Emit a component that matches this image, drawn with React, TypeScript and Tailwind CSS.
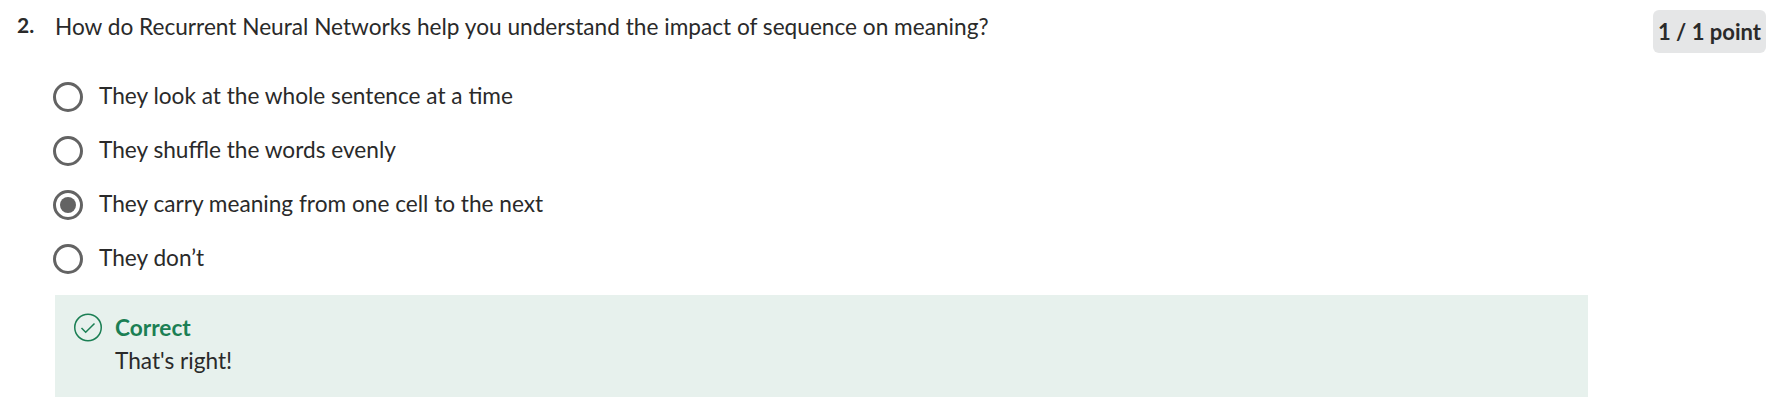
const options = [
  { label: "They look at the whole sentence at a time", checked: false },
  { label: "They shuffle the words evenly", checked: false },
  { label: "They carry meaning from one cell to the next", checked: true },
  { label: "They don’t", checked: false },
];

function Radio({ checked }: { checked: boolean }) {
  return (
    <span className="flex h-[30px] w-[30px] shrink-0 items-center justify-center rounded-full border-[3px] border-[#636363] bg-white">
      {checked && <span className="h-[16px] w-[16px] rounded-full bg-[#636363]" />}
    </span>
  );
}

export default function App() {
  return (
    <div className="h-[416px] w-[1776px] overflow-hidden bg-white font-['Lato',sans-serif] text-[22.65px] text-[#2a2a2a]">
      <div className="flex h-[53px] items-start pt-[10px] pr-[10px]">
        <div className="w-[55px] pl-[17px] text-[21px] leading-[30px] font-bold">2.</div>
        <div className="flex-1 pt-[2px] leading-[30px]">
          How do Recurrent Neural Networks help you understand the impact of sequence on meaning?
        </div>
        <div className="flex h-[43px] w-[113px] items-center justify-center rounded-[6px] bg-[#e5e6e7] text-[22px] font-bold">
          1 / 1 point
        </div>
      </div>

      <div className="ml-[53px] mt-[29px] flex w-[1534px] flex-col gap-[24px]">
        {options.map((opt) => (
          <div key={opt.label} className="flex h-[30px] items-center gap-[16px]">
            <Radio checked={opt.checked} />
            <span className="-translate-y-px">{opt.label}</span>
          </div>
        ))}
      </div>

      <div className="ml-[55px] mt-[21px] flex h-[102px] w-[1533px] gap-[13px] bg-[#e7f1ed] pt-[18px] pl-[19px]">
        <svg width="28" height="29" viewBox="0 0 28 29" fill="none" className="shrink-0" stroke="#1b7f54">
          <circle cx="14" cy="14.5" r="13.25" strokeWidth="1.5" />
          <path d="M7.5 15l4.2 4.3 8.8-8.8" strokeWidth="1.5" />
        </svg>
        <div className="-mt-[2px] leading-[33px]">
          <div className="font-bold text-[#1b7f54]">Correct</div>
          <div>That's right!</div>
        </div>
      </div>
    </div>
  );
}
